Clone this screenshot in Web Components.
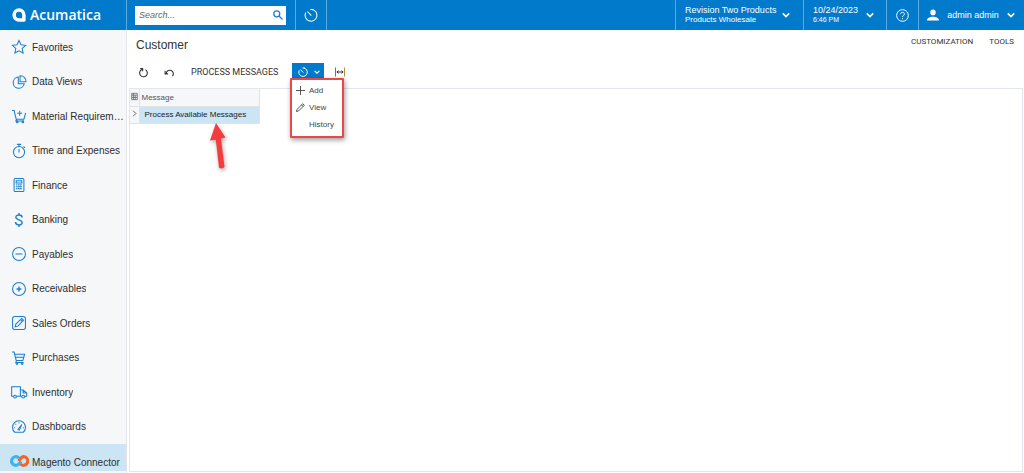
<!DOCTYPE html>
<html lang="en">
<head>
<meta charset="utf-8">
<title>Customer</title>
<style>
html,body{margin:0;padding:0;background:#fff}
body{font-family:"Liberation Sans",Arial,sans-serif;font-size:10px;color:#333}
</style>
</head>
<body>
<acu-app></acu-app>
<script>
const ICONS = {
  star:'<path d="M10 .8l2.800 6 6.600.8-4.800 4.500 1.200 6.500L10 15.500l-5.800 3.100 1.200-6.500L.6 7.600l6.600-.8z"/>',
  pie:'<path d="M9 3a8 8 0 1 0 8.500 9.500H9z"/><path d="M11.500 1v8.500H20A8 8 0 0 0 11.500 1z"/>',
  cartplus:'<path d="M0 2h3l3 12.500h11l2.500-9M6.500 14.500L5.500 17H17M11 2.500v7M7.500 6h7"/><circle cx="7.500" cy="18.500" r="1.200"/><circle cx="15.500" cy="18.500" r="1.200"/>',
  timer:'<circle cx="10" cy="11.500" r="8"/><path d="M7 .5h6M10 .5v3M10 7v5M16.500 3.500l2 2"/>',
  calc:'<rect x="3" y=".8" width="14" height="18.400" rx="1.500"/><path d="M6 4h8v3H6z"/><path d="M6 10h8M6 12.500h8M6 15h8M7 9v8M10 9v8M13 9v8" stroke-dasharray="1.500 1"/>',
  dollar:'<path d="M14.500 6.500C14.500 1.500 5.500 1.800 5.500 6c0 4.500 9 3 9 7.800 0 4.500-9.500 4.500-9.500-.8M10 0v3M10 17v3" stroke-width="2"/>',
  minus:'<circle cx="10" cy="10" r="9.200"/><path d="M5 10h10"/>',
  plus:'<circle cx="10" cy="10" r="9.200"/><path d="M6.500 10h7M10 6.500v7" stroke-width="2"/>',
  edit:'<rect x=".8" y=".8" width="18.400" height="18.400" rx="3"/><path d="M4.500 15.500l1-4L14 3.500 16.500 6 8.500 14.500zM12.500 5.500l2 2"/>',
  cart:'<path d="M0 1.500h3l3 12h9.500l2.500-9H4M5 9h12M6.500 13.500L5.500 16.500h11"/><circle cx="7" cy="18" r="1.200"/><circle cx="14.500" cy="18" r="1.200"/>',
  truck:'<path d="M2 16H-.5V2.500H12V16H6.500M12 7h4l5 4.500V16h-3M14 16h-2M16 7.500v4h4.500"/><circle cx="4.300" cy="16.500" r="2"/><circle cx="16" cy="16.500" r="2"/>',
  gauge:'<path d="M4 17.500a9.300 9.300 0 1 1 12 0zM8.500 13.500l5.500-7-3.500 8zM3 11h1.500M5 5.500l1 1M10 3.500V5M15.500 11H17"/>',
  search:'<circle cx="7.500" cy="7.500" r="6"/><path d="M12 12l7 7"/>',
  clock:'<path d="M11.500 2a8.500 8.500 0 1 1-9 4.500M10.500 11L5 5M9 2h5"/>',
  help:'<circle cx="10" cy="10" r="9"/><path d="M7 8c0-4 6-3.700 6-.3 0 2.200-3 2.300-3 4.500M10 14v1.700"/>',
  user:'<path fill="currentColor" stroke="none" d="M10 1a4.500 4.800 0 1 1 0 9.600A4.500 4.800 0 0 1 10 1zM0 19c0-8 20-8 20 0z"/>',
  down:'<path d="M2 6l8 8 8-8"/>', right:'<path d="M6 2l8 8-8 8"/>',
  refresh:'<path d="M7 4.500a7 7 0 1 0 6.500.3M4 3h4.500v4.500"/>',
  undo:'<path d="M4 12a6.500 6.500 0 1 1 11.500 4.500M2 7v5.500h5.500"/>',
  fit:'<path d="M1 1v18" stroke="#2f83b5"/><path d="M19 1v18" stroke="#b98a3c"/><path d="M3.500 10h13M7 7l-3 3 3 3M13 7l3 3-3 3"/>',
  add:'<path d="M10 0v20M0 10h20"/>',
  pencil:'<path d="M1 19l1.500-5L15 1.500 18.500 5 6 17.500zM12 4l4 4"/>',
  sheet:'<path d="M2 1h16v18H2zM2 6h16M7 1v18M12 6v13M2 12.500h16"/>',
  logo:'<path fill="currentColor" stroke="none" fill-rule="evenodd" d="M10 .5a9.500 9.500 0 0 1 9.500 9.500v7.500q0 2-2 2H10A9.500 9.500 0 0 1 10 .5zM10 5.500a4.500 4.500 0 0 0 0 9h4.500V10A4.500 4.500 0 0 0 10 5.500z"/>',
  link:'<path d="M13 10.500C9.500 15 7.500 16.200 5.500 16.200a6.200 6.200 0 1 1 4.500-10.500" stroke="#35b7ee" stroke-width="4.500"/><path d="M9.500 10C13 5 14.500 3.800 16.500 3.800a6.200 6.200 0 1 1-4.500 10.500" stroke="#f2652a" stroke-width="4.500"/>'
};

class AcuIcon extends HTMLElement {
  constructor(){ super(); this.attachShadow({mode:'open'}); }
  connectedCallback(){
    this.shadowRoot.innerHTML = `<style>
      :host{display:inline-flex;flex:none;width:var(--icon,12px);height:var(--icon,12px)}
      svg{width:100%;height:100%;overflow:visible;fill:none;stroke:currentColor;stroke-width:var(--stroke,1.5)}
    </style><svg viewBox="0 0 20 20" aria-hidden="true">${ICONS[this.getAttribute('name')]||''}</svg>`;
  }
}
customElements.define('acu-icon', AcuIcon);

function define(name, markup){
  const t = document.createElement('template');
  t.innerHTML = markup;
  customElements.define(name, class extends HTMLElement {
    constructor(){ super(); this.attachShadow({mode:'open'}).append(t.content.cloneNode(true)); }
  });
}

define('acu-nav-item', `<style>
  :host{display:flex;flex:1 0 28px}
  a{display:flex;flex:1;min-width:0;align-items:center;gap:6px;padding:0 0 0 12px;color:#2d2d2d;text-decoration:none;white-space:nowrap}
  .ic{display:flex;width:14px;flex:none;color:#1b7fd0;--icon:14px}
  .tx{min-width:0;overflow:hidden;text-overflow:ellipsis;line-height:14px;padding-top:1px}
  :host([current]){flex:none;background:#cce5f5;margin-bottom:2px}
  :host([current]) a{padding-top:10px}
  :host([current]) .ic{padding-bottom:3px}
</style><a href="#"><span class="ic"><slot name="icon"></slot></span><span class="tx"><slot></slot></span></a>`);

define('acu-sidebar', `<style>
  :host{display:flex;flex-direction:column;background:#f5f7f9;border-right:1px solid #e3e6ea;box-sizing:border-box}
  nav{display:flex;flex-direction:column;flex:1}
</style><nav aria-label="Workspaces"><slot></slot></nav>`);

define('acu-header', `<style>
  :host{display:flex;height:30px;background:#027acc;color:#fff;font-size:9px}
  .cell{display:flex;align-items:center;border:0;border-left:1px solid #5aabe0;box-sizing:border-box;background:none;color:inherit;font:inherit;padding:0;text-align:left}
  .brand{display:flex;align-items:center;gap:4px;width:126px;box-sizing:border-box;padding-left:12px;color:#fff;text-decoration:none;font:600 14px/20px "Open Sans",sans-serif;--icon:14px}
  .searchcell{padding:0 9px 0 8px}
  form{display:flex;align-items:center;background:#fff;width:151px;height:19px;padding-right:3px;box-sizing:border-box;--icon:10px;--stroke:2.5}
  input{flex:1;min-width:0;border:0;outline:0;background:none;padding:0 4px;font:italic 9px "Liberation Sans",Arial,sans-serif;color:#444}
  input::placeholder{color:#666;opacity:1}
  form button{display:flex;border:0;background:none;padding:0;color:#1b7fd0}
  .clock{width:32px;justify-content:center;border-right:1px solid #5aabe0;--icon:14px}
  .space{flex:1}
  .two{display:flex;flex-direction:column;line-height:10px;flex:1}
  .two small{font-size:8px;line-height:10px}
  .company,.date,.me{--icon:8px;--stroke:4}
  .company{width:128px;padding:0 13px 0 9px}
  .date{width:83px;padding:0 12px 0 9px}
  .date small{font-size:7px}
  .help{width:32px;justify-content:center;--icon:13px}
  .me{width:106px;padding:0 9px 0 8px;justify-content:space-between}
  .me .person{--icon:12px}
</style>
<a class="brand" href="#"><acu-icon name="logo"></acu-icon><span>Acumatica</span></a>
<div class="cell searchcell"><form role="search"><input type="text" placeholder="Search..." aria-label="Search"><button type="button" aria-label="Search"><acu-icon name="search"></acu-icon></button></form></div>
<button class="cell clock" aria-label="Business date"><acu-icon name="clock"></acu-icon></button>
<span class="space"></span>
<button class="cell company"><span class="two"><span>Revision Two Products</span><small>Products Wholesale</small></span><acu-icon name="down"></acu-icon></button>
<button class="cell date"><span class="two"><span>10/24/2023</span><small>6:46 PM</small></span><acu-icon name="down"></acu-icon></button>
<button class="cell help" aria-label="Help"><acu-icon name="help"></acu-icon></button>
<button class="cell me"><acu-icon class="person" name="user"></acu-icon><span>admin admin</span><acu-icon name="down"></acu-icon></button>`);

define('acu-schedule-menu', `<style>
  :host{display:block;position:relative}
  .toggle{display:flex;align-items:center;justify-content:space-between;width:32px;height:18px;border:0;padding:0 4px 0 6px;background:#027acc;color:#fff;--icon:10px}
  .toggle .caret{--icon:6px;--stroke:4}
  .menu{position:absolute;z-index:2;left:-2px;top:15px;width:54px;box-sizing:border-box;border:2px solid #e94848;border-radius:1px;background:#fff;box-shadow:1px 2px 5px #0006;padding:2px 0 3px;display:flex;flex-direction:column}
  .menu button{display:grid;grid-template-columns:10px 1fr;gap:3px;align-items:center;height:17px;border:0;background:none;padding:0 0 0 4px;text-align:left;color:#444;font:8px "Liberation Sans",Arial,sans-serif;--icon:9px;--stroke:2}
</style>
<button class="toggle" aria-label="Schedules" aria-expanded="true"><acu-icon name="clock"></acu-icon><acu-icon class="caret" name="down"></acu-icon></button>
<div class="menu" role="menu">
<button role="menuitem"><acu-icon name="add"></acu-icon><span>Add</span></button>
<button role="menuitem"><acu-icon name="pencil"></acu-icon><span>View</span></button>
<button role="menuitem"><span></span><span>History</span></button>
</div>`);

define('acu-toolbar', `<style>
  :host{display:flex;align-items:center;height:18px;padding-left:9px;--stroke:2}
  button{display:flex;border:0;background:none;padding:0;color:#333;font:9px Roboto,"Liberation Sans",sans-serif;--icon:11px}
  .undo{margin:0 16px 0 15px}
  .process{width:91px;margin-right:10px;white-space:nowrap}
  .fit{margin-left:11px;--icon:10px}
</style>
<button aria-label="Refresh"><acu-icon name="refresh"></acu-icon></button>
<button class="undo" aria-label="Cancel"><acu-icon name="undo"></acu-icon></button>
<button class="process">PROCESS MESSAGES</button>
<acu-schedule-menu></acu-schedule-menu>
<button class="fit" aria-label="Fit to screen"><acu-icon name="fit"></acu-icon></button>`);

define('acu-grid', `<style>
  :host{display:block;position:relative;border:1px solid #e3e6ea;font-size:8px}
  table{border-collapse:collapse;table-layout:fixed;width:130px}
  th,td{box-sizing:border-box;height:17px;padding:0;text-align:left;font-weight:400;border-right:1px solid #e0e4e8;border-bottom:1px solid #e0e4e8}
  th:first-child,td:first-child{width:9px}
  th{background:#f5f7f9;color:#555;padding-left:2px}
  td{color:#222;padding-left:5px;white-space:nowrap}
  th:first-child,td:first-child{padding:0 1px;background:#f5f7f9;--icon:7px;--stroke:2}
  td.sel{background:#cce5f5}
  .arrow{position:absolute;left:82px;top:33px;width:14px;height:49px;overflow:visible;filter:drop-shadow(1px 2px 2px #0005)}
</style>
<table><thead><tr><th aria-label="Columns"><acu-icon name="sheet"></acu-icon></th><th>Message</th></tr></thead>
<tbody><tr><td><acu-icon name="right"></acu-icon></td><td class="sel">Process Available Messages</td></tr></tbody></table>
<svg class="arrow" viewBox="0 0 14 49" aria-hidden="true"><path fill="#f33d3d" d="M4 1L13.500 15.500 9 16.500 12.500 45q-2 2.500-5.500.7L3.800 17.800-2 18.500z"/></svg>`);

define('acu-screen', `<style>
  :host{display:flex;flex-direction:column;padding:6px 1px 1px 2px;min-width:0;box-sizing:border-box}
  header{display:flex;justify-content:space-between;align-items:flex-start;padding:0 9px 0 7px}
  h1{margin:0;font-size:12px;line-height:18px;font-weight:400;color:#333}
  .links{display:flex;gap:16px}
  .links a{color:#333;text-decoration:none;font:8px/12px Roboto,"Liberation Sans",sans-serif}
  acu-toolbar{margin:9px 0 7px}
  acu-grid{flex:1}
</style>
<header><h1>Customer</h1><div class="links"><a href="#">CUSTOMIZATION</a><a href="#">TOOLS</a></div></header>
<acu-toolbar></acu-toolbar>
<acu-grid></acu-grid>`);

define('acu-app', `<style>
  :host{display:grid;grid-template:30px 1fr / 127px 1fr;min-height:100vh}
  acu-header{grid-column:1 / -1}
</style>
<acu-header></acu-header>
<acu-sidebar>
<acu-nav-item><acu-icon slot="icon" name="star"></acu-icon>Favorites</acu-nav-item>
<acu-nav-item><acu-icon slot="icon" name="pie"></acu-icon>Data Views</acu-nav-item>
<acu-nav-item><acu-icon slot="icon" name="cartplus"></acu-icon>Material Requirements</acu-nav-item>
<acu-nav-item><acu-icon slot="icon" name="timer"></acu-icon>Time and Expenses</acu-nav-item>
<acu-nav-item><acu-icon slot="icon" name="calc"></acu-icon>Finance</acu-nav-item>
<acu-nav-item><acu-icon slot="icon" name="dollar"></acu-icon>Banking</acu-nav-item>
<acu-nav-item><acu-icon slot="icon" name="minus"></acu-icon>Payables</acu-nav-item>
<acu-nav-item><acu-icon slot="icon" name="plus"></acu-icon>Receivables</acu-nav-item>
<acu-nav-item><acu-icon slot="icon" name="edit"></acu-icon>Sales Orders</acu-nav-item>
<acu-nav-item><acu-icon slot="icon" name="cart"></acu-icon>Purchases</acu-nav-item>
<acu-nav-item><acu-icon slot="icon" name="truck"></acu-icon>Inventory</acu-nav-item>
<acu-nav-item><acu-icon slot="icon" name="gauge"></acu-icon>Dashboards</acu-nav-item>
<acu-nav-item current><acu-icon slot="icon" name="link"></acu-icon>Magento Connector</acu-nav-item>
</acu-sidebar>
<acu-screen></acu-screen>`);
</script>
</body>
</html>
